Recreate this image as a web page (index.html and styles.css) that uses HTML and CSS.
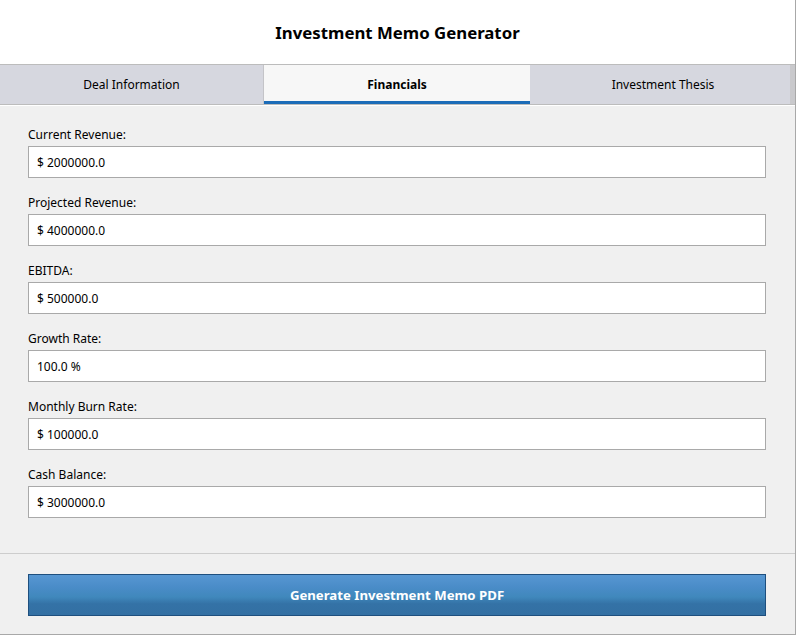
FILE: index.html
```html
<!DOCTYPE html>
<html>
<head>
<meta charset="utf-8">
<link rel="stylesheet" href="styles.css">
</head>
<body>
<div class="app">
  <header class="header"><h1 class="title">Investment Memo Generator</h1></header>
  <nav class="tabbar">
    <div class="tabs">
      <div class="tab">Deal Information</div>
      <div class="tab active">Financials</div>
      <div class="tab last">Investment Thesis</div>
    </div>
    <div class="tab-filler"></div>
  </nav>
  <main class="content">
    <div class="field"><label class="label">Current Revenue:</label><div class="input">$ 2000000.0</div></div>
    <div class="field"><label class="label">Projected Revenue:</label><div class="input">$ 4000000.0</div></div>
    <div class="field"><label class="label">EBITDA:</label><div class="input">$ 500000.0</div></div>
    <div class="field"><label class="label">Growth Rate:</label><div class="input">100.0 %</div></div>
    <div class="field"><label class="label">Monthly Burn Rate:</label><div class="input">$ 100000.0</div></div>
    <div class="field"><label class="label">Cash Balance:</label><div class="input">$ 3000000.0</div></div>
  </main>
  <footer class="footer">
    <button class="generate">Generate Investment Memo PDF</button>
  </footer>
</div>
</body>
</html>
```
FILE: styles.css
```css
html, body {
  margin: 0;
  padding: 0;
  background: #ffffff;
}
body {
  font-family: "Segoe UI", "Noto Sans", "Open Sans", sans-serif;
  font-size: 12px;
  color: #000;
}
.app {
  width: 795px;
  height: 634px;
  border-right: 1px solid #a8a8a8;
  border-bottom: 1px solid #a8a8a8;
  display: flex;
  flex-direction: column;
  background: #f0f0f0;
}
.header {
  height: 64px;
  flex: none;
  background: #ffffff;
  display: flex;
  align-items: center;
  justify-content: center;
}
.title {
  margin: 0;
  font-size: 16.8px;
  font-weight: 700;
  line-height: 20px;
  padding-top: 2px;
}
.tabbar {
  display: flex;
  flex: none;
  height: 39px;
  border-top: 1px solid #bcbcbc;
  border-bottom: 1px solid #bcbcbc;
  background: #d5d6de;
}
.tabs {
  display: grid;
  grid-template-columns: 264px 266px 260px;
  width: 790px;
}
.tab {
  display: flex;
  align-items: center;
  justify-content: center;
  font-size: 12px;
  color: #000;
  background: #d6d7df;
  border-right: 1px solid #c4c4c8;
}
.tab.last {
  padding-left: 6px;
  border-right: none;
}
.tab.active {
  background: #f7f7f7;
  font-weight: 700;
  border-bottom: 3px solid #1c6cb8;
  padding-top: 3px;
  border-right: none;
}
.tab-filler {
  flex: 1;
  background: #c9c9cc;
}
.content {
  flex: 1;
  padding: 21px 29px 0 28px;
  display: flex;
  flex-direction: column;
  gap: 17px;
  border-top: 1px solid #ffffff;
}
.field {
  display: flex;
  flex-direction: column;
  gap: 3px;
}
.label {
  font-size: 12px;
  line-height: 16px;
}
.input {
  height: 30px;
  background: #ffffff;
  border: 1px solid #a9a9a9;
  padding: 0 8px;
  display: flex;
  align-items: center;
  font-size: 12px;
}
.footer {
  flex: none;
  border-top: 1px solid #cdcdcd;
  height: 81px;
  padding: 20px 29px 0 28px;
  box-sizing: border-box;
}
.generate {
  display: block;
  width: 100%;
  height: 42px;
  border: 1px solid #1e4f7e;
  background: linear-gradient(to bottom, #5797d2 0%, #4a8cc8 30%, #4088bc 55%, #3472a6 72%, #3370a3 100%);
  color: #ffffff;
  font-family: "Segoe UI", "Noto Sans", "Open Sans", sans-serif;
  font-size: 13.2px;
  font-weight: 700;
  padding: 0;
}
```
